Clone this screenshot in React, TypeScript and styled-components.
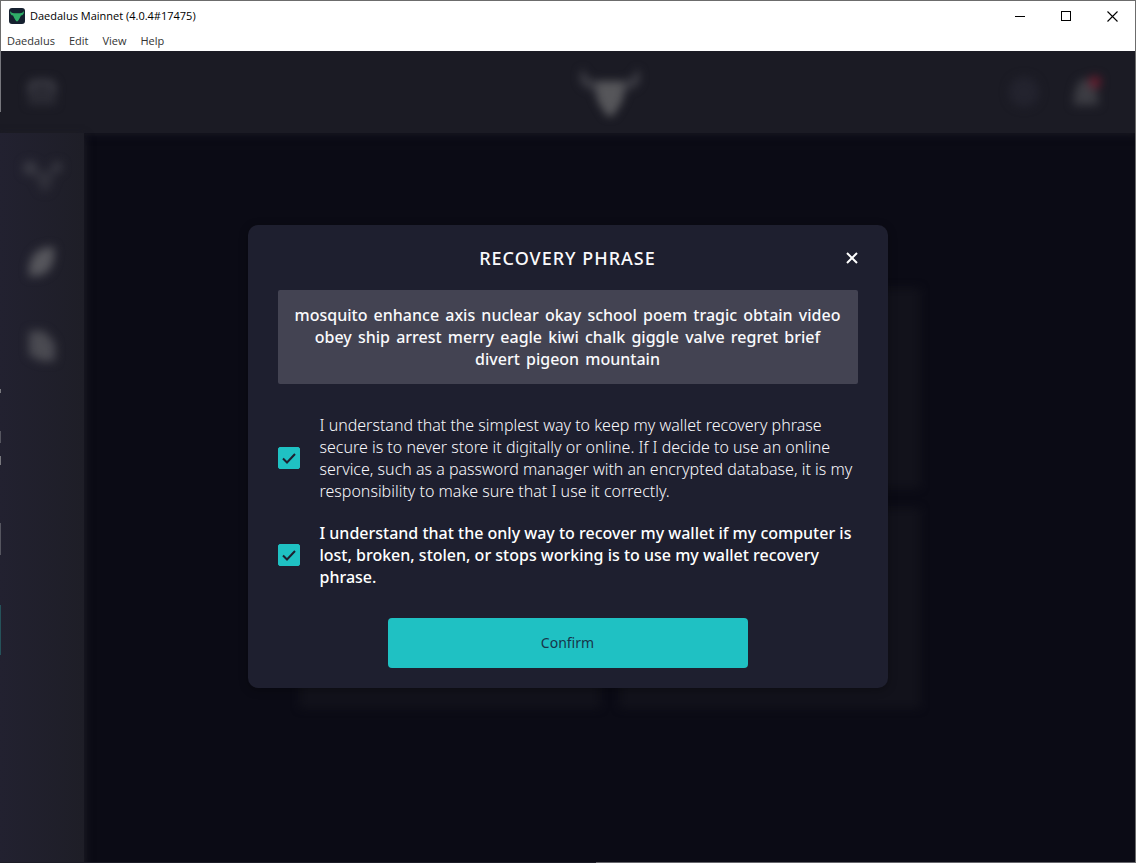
import React, { useState } from "react";
import styled, { createGlobalStyle } from "styled-components";

const GlobalStyle = createGlobalStyle`
  *, *::before, *::after { box-sizing: border-box; }
  body { margin: 0; background: #0b0b15; }
  button, input { font: inherit; }
`;

const Window = styled.div`
  display: flex;
  flex-direction: column;
  min-height: 100vh;
  border-top: 1px solid #6c6c6c;
  border-right: 1px solid #6c6c6c;
  font-family: "Noto Sans", sans-serif;
`;

const Chrome = styled.header`
  background: #fff;
  border-left: 1px solid #6c6c6c;
  color: #000;
  font-family: "Open Sans", "Noto Sans", sans-serif;
  font-size: 11px;
  line-height: 20px;
`;

const TitleBar = styled.div`
  display: flex;
  align-items: center;
  height: 30px;
  padding-left: 8px;
`;

const AppTitle = styled.span`
  flex: 1;
  margin-left: 5px;
`;

const WindowButton = styled.button`
  display: grid;
  place-items: center;
  width: 46px;
  height: 28px;
  padding: 0;
  border: 0;
  background: none;
  color: #000;
`;

const MenuBar = styled.nav`
  display: flex;
  gap: 14px;
  height: 20px;
  padding-left: 6px;
`;

const MenuButton = styled.button`
  padding: 0;
  border: 0;
  background: none;
  color: #333;
`;

const Stage = styled.main`
  position: relative;
  flex: 1;
  display: grid;
  overflow: hidden;
`;

const Backdrop = styled.div`
  display: flex;
  flex-direction: column;
  background: #0b0b15;
`;

const TopBar = styled.div`
  display: grid;
  grid-template-columns: 84px 1fr 126px;
  align-items: center;
  height: 82px;
  background: #1b1b24;
  box-shadow: 0 0 8px 1px #1b1b24;
`;

const Soft = styled.svg<{ $blur?: number }>`
  display: block;
  overflow: visible;
  justify-self: center;
  filter: blur(${(p) => p.$blur ?? 5}px);
`;

const LogoSlot = styled.div`
  display: grid;
  justify-content: center;
  padding-left: 126px;
`;

const TopActions = styled.div`
  display: flex;
  gap: 32px;
`;

const Body = styled.div`
  flex: 1;
  display: flex;
`;

const Sidebar = styled.div`
  display: flex;
  flex-direction: column;
  align-items: center;
  gap: 52px;
  width: 84px;
  padding-top: 28px;
  background: linear-gradient(90deg, #222130, #1e1e27);
  box-shadow: 0 4px 8px 1px #1e1e27;
`;

const Content = styled.div`
  flex: 1;
  display: grid;
  place-content: center;
  grid-template-columns: repeat(2, 300px);
  grid-auto-rows: 200px;
  gap: 20px;
`;

const Card = styled.div`
  background: #12121b;
  filter: blur(4px);
`;

const Overlay = styled.div`
  position: absolute;
  inset: 0;
  display: grid;
  place-items: center;
  padding: 20px;
`;

const Dialog = styled.section`
  width: 100%;
  max-width: 640px;
  padding: 0 30px 20px;
  border-radius: 10px;
  background: #1e1f2f;
  box-shadow: 0 2px 10px rgba(0, 0, 0, 0.3);
  color: #fafafc;
  font-size: 16px;
  line-height: 22px;
`;

const DialogHeader = styled.div`
  display: grid;
  grid-template-columns: 12px 1fr 12px;
  align-items: center;
  height: 65px;
`;

const DialogTitle = styled.h1`
  grid-column: 2;
  margin: 0;
  text-align: center;
  font-size: 18px;
  font-weight: 500;
  letter-spacing: 1px;
  text-transform: uppercase;
`;

const CloseButton = styled.button`
  display: grid;
  place-items: center;
  padding: 0;
  border: 0;
  background: none;
  color: #fff;
  cursor: pointer;
`;

const Phrase = styled.p`
  margin: 0 0 30px;
  padding: 14px;
  border-radius: 2px;
  background: #434352;
  text-align: center;
  font-weight: 500;
`;

const Word = styled.span`
  margin: 0 1px;
`;

const Terms = styled.div`
  display: grid;
  gap: 20px;
`;

const Term = styled.label<{ $strong?: boolean }>`
  display: grid;
  grid-template-columns: 22px 1fr;
  align-items: center;
  gap: 20px;
  color: ${(p) => (p.$strong ? "#ffffff" : "#f8f8fc")};
  font-weight: ${(p) => (p.$strong ? 500 : 300)};
`;

const CheckWrap = styled.span`
  display: grid;

  & > * {
    grid-area: 1 / 1;
    place-self: center;
  }
`;

const CheckInput = styled.input`
  appearance: none;
  width: 22px;
  height: 22px;
  margin: 0;
  border: 1px solid #1fc1c3;
  border-radius: 2px;

  &:checked { background: #1fc1c3; }
  &:not(:checked) + svg { visibility: hidden; }
`;

const ConfirmButton = styled.button`
  display: block;
  width: 360px;
  max-width: 100%;
  height: 50px;
  margin: 30px auto 0;
  border: 0;
  border-radius: 4px;
  background: #1fc1c3;
  color: #17354a;
  font-size: 14px;
  font-weight: 400;
  cursor: pointer;
`;

const EdgeMarks = styled.div`
  position: absolute;
  inset: 0 auto 0 0;
  width: 1px;
  background: linear-gradient(
    #77777d 0 61px, transparent 61px 338px, #77777d 338px 342px,
    transparent 342px 380px, #55555f 380px 392px, transparent 392px 405px,
    #77777d 405px 414px, transparent 414px 472px, #55555f 472px 504px,
    transparent 504px 554px, #25525a 554px 604px, transparent 604px
  );
`;

const BottomEdge = styled.div`
  height: 1px;
  background: linear-gradient(90deg, #1c1c26 52.5%, #66666c 52.5%);
`;

function Bull({ size, color, blur }: { size: number; color: string; blur: number }) {
  return (
    <Soft $blur={blur} width={size} height={(size * 48) / 60} viewBox="0 0 60 48">
      <path
        d="M3 0C-4 10 0 20 13 22L18 34 27 48H33L42 34 47 22C60 20 64 10 57 0 56 7 51 11 44 13H16C9 11 4 7 3 0Z"
        fill="#3a3a42"
      />
      <path d="M16 13H44L42 34 33 48H27L18 34Z" fill={color} />
    </Soft>
  );
}

const phrase =
  "mosquito enhance axis nuclear okay school poem tragic obtain video obey ship arrest merry eagle kiwi chalk giggle valve regret brief divert pigeon mountain";

const terms = [
  {
    strong: false,
    text: "I understand that the simplest way to keep my wallet recovery phrase secure is to never store it digitally or online. If I decide to use an online service, such as a password manager with an encrypted database, it is my responsibility to make sure that I use it correctly.",
  },
  {
    strong: true,
    text: "I understand that the only way to recover my wallet if my computer is lost, broken, stolen, or stops working is to use my wallet recovery phrase.",
  },
];

export default function App() {
  const [accepted, setAccepted] = useState([true, true]);
  const toggle = (index: number) =>
    setAccepted(accepted.map((value, i) => (i === index ? !value : value)));

  return (
    <Window>
      <GlobalStyle />
      <Chrome>
        <TitleBar>
          <svg width="16" height="16" viewBox="0 0 16 16">
            <rect width="16" height="16" rx="3" fill="#15202f" />
            <path
              d="M1.2 3C.8 6 2.2 7.2 4 7.6L5.5 10.5 7.2 13.2H8.8L10.5 10.5 12 7.6C13.8 7.2 15.2 6 14.8 3 14 4.8 12.5 5.2 11 5.2H5C3.5 5.2 2 4.8 1.2 3Z"
              fill="#2fae68"
            />
          </svg>
          <AppTitle>Daedalus Mainnet (4.0.4#17475)</AppTitle>
          <WindowButton aria-label="Minimize">
            <svg width="10" height="10" shapeRendering="crispEdges"><path d="M0 5.5H10" stroke="currentColor" /></svg>
          </WindowButton>
          <WindowButton aria-label="Maximize">
            <svg width="10" height="10" shapeRendering="crispEdges"><path d="M.5.5H9.5V9.5H.5Z" fill="none" stroke="currentColor" /></svg>
          </WindowButton>
          <WindowButton aria-label="Close window">
            <svg width="11" height="11"><path d="M.5.5 10.5 10.5M10.5.5.5 10.5" stroke="currentColor" strokeWidth="1.1" /></svg>
          </WindowButton>
        </TitleBar>
        <MenuBar>
          {["Daedalus", "Edit", "View", "Help"].map((name) => (
            <MenuButton key={name}>{name}</MenuButton>
          ))}
        </MenuBar>
      </Chrome>

      <Stage>
        <Backdrop aria-hidden="true">
          <TopBar>
            <Soft $blur={4} width="30" height="26" viewBox="0 0 30 26">
              <path d="M1 26V8Q1 0 9 0H21Q29 0 29 8V26Z" fill="#2a2a33" />
              <path d="M3 14V8Q3 3 9 3H21Q27 3 27 8V14" fill="none" stroke="#3a3a43" strokeWidth="5" />
            </Soft>
            <LogoSlot><Bull size={60} color="#56565a" blur={4} /></LogoSlot>
            <TopActions>
              <Soft width="30" height="30" viewBox="0 0 30 30"><circle cx="15" cy="15" r="15" fill="#23232e" /></Soft>
              <Soft width="30" height="30" viewBox="0 0 30 30">
                <path d="M2 28C4 20 3 2 15 2S26 20 28 28Z" fill="#3c3c43" />
                <circle cx="24" cy="5" r="6" fill="#6a1c2e" />
              </Soft>
            </TopActions>
          </TopBar>
          <Body>
            <Sidebar>
              <Soft width="40" height="32" viewBox="0 0 40 32" fill="#3b3b45">
                <circle cx="8" cy="7" r="7" /><circle cx="35" cy="6" r="5" />
                <path d="M10 10H34L26 30H20Z" fill="#30303a" />
              </Soft>
              <Soft width="30" height="34" viewBox="0 0 30 34"><path d="M27 2C10 2 1 10 2 31 20 33 29 22 27 2Z" fill="#56565c" /></Soft>
              <Soft width="30" height="32" viewBox="0 0 30 32"><path d="M2 0H17L28 12V30H14L2 24Z" fill="#4a4a51" /></Soft>
            </Sidebar>
            <Content><Card /><Card /><Card /><Card /></Content>
          </Body>
        </Backdrop>
        <EdgeMarks />

        <Overlay>
          <Dialog role="dialog" aria-modal="true" aria-labelledby="dialog-title">
            <DialogHeader>
              <DialogTitle id="dialog-title">Recovery phrase</DialogTitle>
              <CloseButton aria-label="Close">
                <svg width="12" height="12" viewBox="0 0 12 12"><path d="M1 1 11 11M11 1 1 11" stroke="currentColor" strokeWidth="2" /></svg>
              </CloseButton>
            </DialogHeader>
            <Phrase>
              {phrase.split(" ").map((word) => (
                <React.Fragment key={word}>
                  <Word>{word}</Word>{" "}
                </React.Fragment>
              ))}
            </Phrase>
            <Terms>
              {terms.map((term, index) => (
                <Term key={index} $strong={term.strong}>
                  <CheckWrap>
                    <CheckInput type="checkbox" checked={accepted[index]} onChange={() => toggle(index)} />
                    <svg width="14" height="12" viewBox="0 0 14 12" fill="none" pointerEvents="none">
                      <path d="M1 6.5 5 10.5 13 2" stroke="#1e1f2f" strokeWidth="2" />
                    </svg>
                  </CheckWrap>
                  <span>{term.text}</span>
                </Term>
              ))}
            </Terms>
            <ConfirmButton>Confirm</ConfirmButton>
          </Dialog>
        </Overlay>
      </Stage>
      <BottomEdge />
    </Window>
  );
}
